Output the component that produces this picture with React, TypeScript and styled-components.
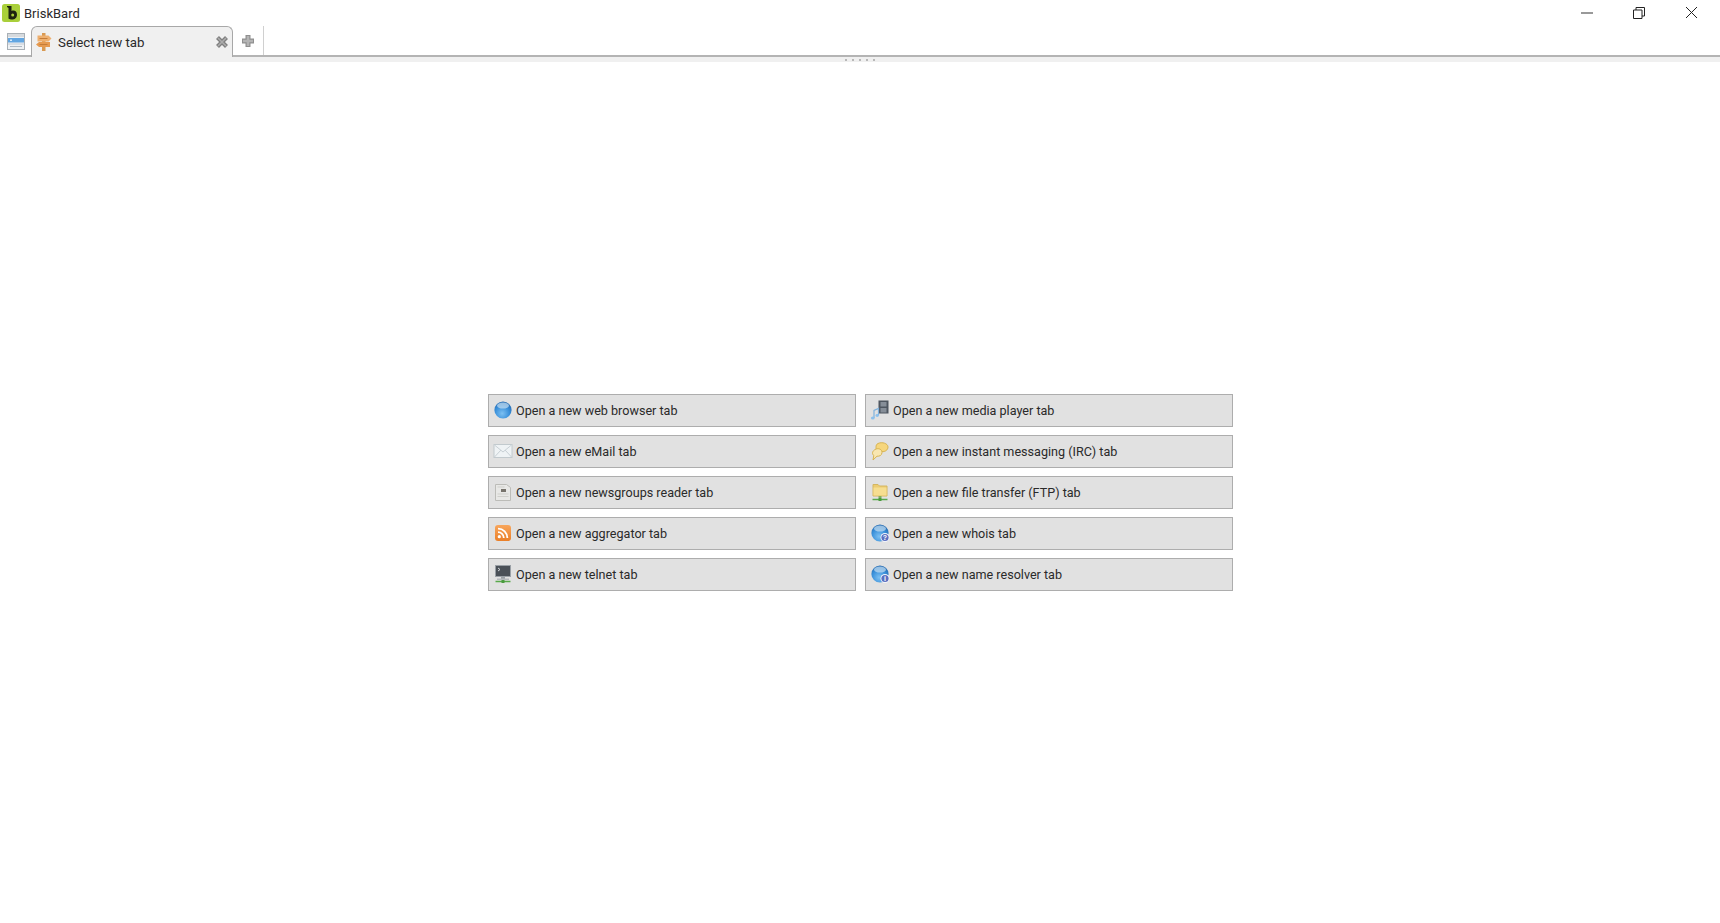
import React from 'react';
import styled, {createGlobalStyle} from 'styled-components';

const GlobalStyle = createGlobalStyle`
  html, body {
    margin: 0;
    padding: 0;
    height: 100%;
    background: #fff;
    font-family: Roboto, "Liberation Sans", sans-serif;
    overflow: hidden;
  }
  #root {
    height: 100%;
  }
`;

const Globe = ({badge}: {badge?: string}) => (
  <svg width="20" height="20" viewBox="0 0 20 20">
    <defs>
      <radialGradient id={`globe${badge || ''}`} cx="0.45" cy="0.7" r="0.7">
        <stop offset="0" stopColor="#7cc0f2" />
        <stop offset="0.6" stopColor="#3a90da" />
        <stop offset="1" stopColor="#2468ae" />
      </radialGradient>
    </defs>
    <circle cx="10" cy="10" r="8.6" fill={`url(#globe${badge || ''})`} />
    <ellipse cx="10" cy="5.6" rx="6" ry="3" fill="#c6def1" opacity="0.7" />
    {badge && (
      <>
        <circle cx="15" cy="14.5" r="4.5" fill="#f4f6fb" />
        <circle cx="15" cy="14.5" r="3.6" fill="#5a6fc0" />
        <text x="15" y="17" fontSize="7" fontWeight="700" fill="#fff" textAnchor="middle" fontFamily="Liberation Sans, sans-serif">
          {badge}
        </text>
      </>
    )}
  </svg>
);

const MailIcon = () => (
  <svg width="20" height="20" viewBox="0 0 20 20">
    <rect x="1" y="3.500" width="18" height="13" fill="#eff3f5" stroke="#c2cace" />
    <path d="M1.500 4l8.500 7 8.500-7M1.500 16l6.500-7M18.500 16l-6.500-7" fill="none" stroke="#c8d0d5" />
  </svg>
);

const NewsIcon = () => (
  <svg width="20" height="20" viewBox="0 0 20 20">
    <path d="M2.500 2.500h11l4 3v13h-15z" fill="#e8e8e6" stroke="#bcbcb8" />
    <rect x="8" y="7" width="5" height="3" fill="#77736c" />
    <path d="M4.500 5h7M4.500 12h11M4.500 14.500h11" stroke="#cfcfcb" />
  </svg>
);

const RssIcon = () => (
  <svg width="20" height="20" viewBox="0 0 20 20">
    <defs>
      <linearGradient id="rss" x1="0" y1="0" x2="0" y2="1">
        <stop offset="0" stopColor="#f8a65c" />
        <stop offset="1" stopColor="#ea7f28" />
      </linearGradient>
    </defs>
    <rect x="2" y="2" width="16" height="16" rx="3" fill="url(#rss)" />
    <circle cx="6.300" cy="13.700" r="1.600" fill="#fff" />
    <path d="M5 9.200a5.800 5.800 0 0 1 5.800 5.800M5 5.600a9.400 9.400 0 0 1 9.400 9.400" fill="none" stroke="#fff" strokeWidth="1.800" />
  </svg>
);

const TelnetIcon = () => (
  <svg width="20" height="20" viewBox="0 0 20 20">
    <rect x="2.500" y="1.500" width="15" height="11" fill="#4a5057" stroke="#9aa0a6" />
    <path d="M5 4l2 1.500L5 7" fill="none" stroke="#d0d4d8" />
    <rect x="8" y="12.500" width="4" height="2.500" fill="#9aa0a5" />
    <rect x="4" y="14.500" width="12" height="1.500" fill="#b4b8bc" />
    <path d="M2.500 17.500h15" stroke="#58a94a" strokeWidth="1.500" />
    <rect x="8.500" y="16" width="3" height="3" fill="#4a9a3e" />
  </svg>
);

const MediaIcon = () => (
  <svg width="20" height="20" viewBox="0 0 20 20">
    <rect x="8.500" y="0.500" width="10" height="13" fill="#4e5660" />
    <rect x="10.500" y="2" width="6" height="4.500" fill="#868e98" />
    <rect x="10.500" y="8" width="6" height="4.500" fill="#868e98" />
    <path d="M4 18V10.500l4.500-2v7" fill="none" stroke="#7fb1dc" strokeWidth="1.200" />
    <ellipse cx="2.800" cy="18" rx="1.900" ry="1.500" fill="#8cc0ec" />
    <ellipse cx="7.200" cy="15.500" rx="1.700" ry="1.400" fill="#8cc0ec" />
  </svg>
);

const ChatIcon = () => (
  <svg width="20" height="20" viewBox="0 0 20 20">
    <path d="M8 2.500c4-2 10 0 10 3.500 0 3-3 5-6 4.600-3 .4-6-1-6-4 0-2 .3-3.300 2-4.100z" fill="#f6d67c" stroke="#d8b452" />
    <path d="M6 8c3-1 6 .5 6 3.500 0 3-3 4-5 3.700L3 19l.8-4.600C2 13.500 1.500 10 6 8z" fill="#f8e6b0" stroke="#d8b452" />
  </svg>
);

const FolderIcon = () => (
  <svg width="20" height="20" viewBox="0 0 20 20">
    <path d="M3 2.500h5l1.500 1.500h7.500v10H3z" fill="#eccc72" stroke="#d4b660" />
    <rect x="3.500" y="5.500" width="13" height="8" fill="#f6de90" />
    <rect x="8.500" y="14" width="3" height="2" fill="#7eaf5a" />
    <path d="M2.500 17.500h15" stroke="#58a94a" strokeWidth="1.500" />
    <rect x="8.500" y="16" width="3" height="3" fill="#4a9a3e" />
  </svg>
);

const buttons = [
  {label: 'Open a new web browser tab', icon: <Globe />},
  {label: 'Open a new media player tab', icon: <MediaIcon />},
  {label: 'Open a new eMail tab', icon: <MailIcon />},
  {label: 'Open a new instant messaging (IRC) tab', icon: <ChatIcon />},
  {label: 'Open a new newsgroups reader tab', icon: <NewsIcon />},
  {label: 'Open a new file transfer (FTP) tab', icon: <FolderIcon />},
  {label: 'Open a new aggregator tab', icon: <RssIcon />},
  {label: 'Open a new whois tab', icon: <Globe badge="?" />},
  {label: 'Open a new telnet tab', icon: <TelnetIcon />},
  {label: 'Open a new name resolver tab', icon: <Globe badge="i" />},
];

const App = () => (
  <Page>
    <GlobalStyle />
    <TitleBar>
      <AppTitle>
        <svg width="20" height="20" viewBox="0 0 20 20">
          <rect x="1" y="1" width="18" height="18" rx="2.500" fill="#a9cf3a" />
          <path d="M6 3h4.500v5c2.800-1.200 5.500.3 5.500 3.700 0 3.500-3 5.300-6 4.800-1.500-.2-2.200-.6-2.500-1V5L6 4z" fill="#1d2410" />
          <circle cx="11.700" cy="12" r="1.500" fill="#a9cf3a" />
        </svg>
        <TitleText>BriskBard</TitleText>
      </AppTitle>
      <WindowControls>
        <WindowButton>
          <svg width="12" height="12" viewBox="0 0 12 12">
            <path d="M0 6h12" stroke="#555" strokeWidth="1.200" />
          </svg>
        </WindowButton>
        <WindowButton>
          <svg width="12" height="12" viewBox="0 0 12 12">
            <path d="M.5 3h8.500v8.500H.5zM3 3V.5h8.500V9H9" fill="none" stroke="#222" />
          </svg>
        </WindowButton>
        <WindowButton>
          <svg width="13" height="13" viewBox="0 0 13 13">
            <path d="M1 1l11 11M12 1L1 12" stroke="#222" />
          </svg>
        </WindowButton>
      </WindowControls>
    </TitleBar>
    <TabBar>
      <MenuIcon>
        <svg width="18" height="17" viewBox="0 0 18 17">
          <rect x=".5" y=".5" width="17" height="16" fill="#eef1f4" stroke="#a9b0b6" />
          <rect x="1" y="1" width="16" height="3" fill="#d6dade" />
          <rect x="1" y="5" width="16" height="4.500" fill="#62a6e2" />
          <rect x="3" y="6.500" width="2" height="1.500" fill="#d8eafa" />
          <rect x="1" y="10.500" width="16" height="1" fill="#c4ccd4" />
          <rect x="3" y="13" width="12" height="1" fill="#aeb9c4" />
        </svg>
      </MenuIcon>
      <Tab>
        <svg width="18" height="20" viewBox="0 0 18 20">
          <rect x="7" y="1" width="3.500" height="18" fill="#d99a52" />
          <path d="M2.500 3.500h11l3 3-3 3h-11z" fill="#eeb070" />
          <path d="M15 10H4l-3 2.500L4 15h11z" fill="#e69a50" />
          <path d="M4.500 6.500h8M4.500 12.500h8" stroke="#c47c38" />
        </svg>
        <TabLabel>Select new tab</TabLabel>
        <TabClose>
          <svg width="14" height="14" viewBox="0 0 14 14">
            <path d="M2.500 2.500l9 9M11.500 2.500l-9 9" stroke="#7f7f7f" strokeWidth="4.200" />
            <path d="M3 3l8 8M11 3l-8 8" stroke="#adadad" strokeWidth="1.600" />
          </svg>
        </TabClose>
      </Tab>
      <AddTab>
        <svg width="14" height="14" viewBox="0 0 14 14">
          <path d="M7 1v12M1 7h12" stroke="#8f8f8f" strokeWidth="5" />
          <path d="M7 2v10M2 7h10" stroke="#b4b4b4" strokeWidth="2.600" />
        </svg>
      </AddTab>
    </TabBar>
    <Splitter>
      <Grip>
        {[0, 1, 2, 3, 4].map(i => (
          <GripDot key={i} />
        ))}
      </Grip>
    </Splitter>
    <Main>
      <ButtonGrid>
        {buttons.map(b => (
          <TabButton key={b.label}>
            <ButtonIcon>{b.icon}</ButtonIcon>
            {b.label}
          </TabButton>
        ))}
      </ButtonGrid>
    </Main>
  </Page>
);

export default App;

const Page = styled.div`
  display: flex;
  flex-direction: column;
  height: 923px;
  background: #fff;
`;

const TitleBar = styled.div`
  display: flex;
  justify-content: space-between;
  align-items: center;
  height: 26px;
  flex: none;
  padding-right: 2px;
`;

const AppTitle = styled.div`
  display: flex;
  align-items: center;
  gap: 3px;
  padding-left: 1px;
`;

const TitleText = styled.span`
  font-size: 13px;
  color: #2a2a2a;
`;

const WindowControls = styled.div`
  display: flex;
  height: 100%;
`;

const WindowButton = styled.div`
  display: flex;
  align-items: center;
  justify-content: center;
  width: 52.5px;
  height: 100%;
  padding-bottom: 1px;
  box-sizing: border-box;
`;

const TabBar = styled.div`
  display: flex;
  align-items: stretch;
  height: 31px;
  flex: none;
  box-sizing: border-box;
  border-bottom: 2px solid #b4b4b4;
  padding-left: 7px;
`;

const MenuIcon = styled.div`
  display: flex;
  align-items: center;
  width: 24px;
  flex: none;
  padding-top: 1px;
`;

const Tab = styled.div`
  display: flex;
  align-items: center;
  width: 202px;
  height: 31px;
  box-sizing: border-box;
  flex: none;
  padding: 0 3px 0 3px;
  background: #f0f0f0;
  border: 1px solid #a8a8a8;
  border-bottom: none;
  border-radius: 6px 6px 0 0;
  position: relative;
  z-index: 1;
`;

const TabLabel = styled.span`
  flex: 1;
  margin-left: 5px;
  font-size: 13.3px;
  color: #2a2a2a;
`;

const TabClose = styled.div`
  display: flex;
`;

const AddTab = styled.div`
  display: flex;
  align-items: center;
  justify-content: center;
  width: 31px;
  flex: none;
  box-sizing: border-box;
  border-right: 1px solid #d0d0d0;
  padding-top: 1px;
`;

const Splitter = styled.div`
  display: flex;
  align-items: center;
  justify-content: center;
  height: 5px;
  flex: none;
  background: #f0f0f0;
`;

const Grip = styled.div`
  display: flex;
  gap: 5px;
`;

const GripDot = styled.span`
  width: 2px;
  height: 2px;
  background: #b8b8b8;
`;

const Main = styled.div`
  flex: 1;
  display: flex;
  align-items: center;
  justify-content: center;
  padding-left: 1px;
`;

const ButtonGrid = styled.div`
  display: grid;
  grid-template-columns: repeat(2, 368px);
  grid-auto-rows: 33px;
  column-gap: 9px;
  row-gap: 8.2px;
`;

const TabButton = styled.div`
  display: flex;
  align-items: center;
  box-sizing: border-box;
  padding-left: 4px;
  background: #e1e1e1;
  border: 1px solid #adadad;
  font-size: 12.6px;
  color: #2a2a2a;
  white-space: nowrap;
`;

const ButtonIcon = styled.span`
  display: flex;
  width: 23px;
  height: 20px;
  flex: none;
  margin-top: -1px;
`;
